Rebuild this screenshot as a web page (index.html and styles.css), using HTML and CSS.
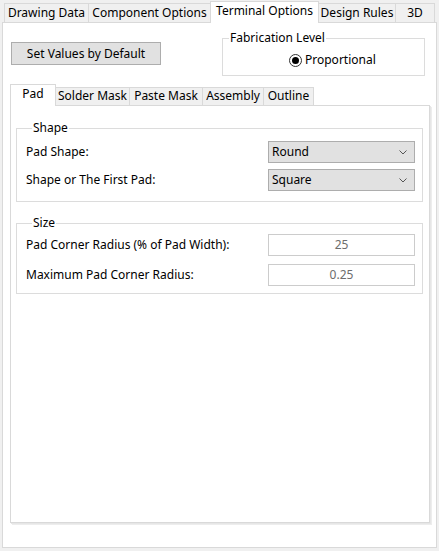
FILE: index.html
```html
<!DOCTYPE html>
<html>
<head>
<meta charset="utf-8">
<link rel="stylesheet" href="styles.css">
</head>
<body>
<div class="tabs top-tabs">
  <div class="tab t-dd">Drawing Data</div>
  <div class="tab t-co">Component Options</div>
  <div class="tab t-to active">Terminal Options</div>
  <div class="tab t-dr">Design Rules</div>
  <div class="tab t-3d">3D</div>
</div>
<div class="panel outer">
  <div class="top-row">
    <button class="btn">Set Values by Default</button>
    <fieldset class="group fab">
      <legend>Fabrication Level</legend>
      <div class="radio"><span class="radio-ring"><span class="radio-dot"></span></span><span>Proportional</span></div>
    </fieldset>
  </div>
  <div class="tabs inner-tabs">
    <div class="tab i-pad active">Pad</div>
    <div class="tab i-sm">Solder Mask</div>
    <div class="tab i-pm">Paste Mask</div>
    <div class="tab i-as">Assembly</div>
    <div class="tab i-ou">Outline</div>
  </div>
  <div class="panel inner">
    <fieldset class="group shape">
      <legend>Shape</legend>
      <div class="row">
        <span class="lbl">Pad Shape:</span>
        <div class="select"><span>Round</span><svg class="chev" width="8" height="5" viewBox="0 0 8 5"><path d="M0.5 0.5 L4 4 L7.5 0.5" fill="none" stroke="#555" stroke-width="1"/></svg></div>
      </div>
      <div class="row">
        <span class="lbl">Shape or The First Pad:</span>
        <div class="select"><span>Square</span><svg class="chev" width="8" height="5" viewBox="0 0 8 5"><path d="M0.5 0.5 L4 4 L7.5 0.5" fill="none" stroke="#555" stroke-width="1"/></svg></div>
      </div>
    </fieldset>
    <fieldset class="group size">
      <legend>Size</legend>
      <div class="row">
        <span class="lbl">Pad Corner Radius (% of Pad Width):</span>
        <div class="input">25</div>
      </div>
      <div class="row">
        <span class="lbl">Maximum Pad Corner Radius:</span>
        <div class="input">0.25</div>
      </div>
    </fieldset>
  </div>
</div>
</body>
</html>
```
FILE: styles.css
```css
* { box-sizing: border-box; }
html, body {
  margin: 0;
  padding: 0;
}
body {
  width: 439px;
  height: 551px;
  background: #f0f0f0;
  font-family: "Noto Sans", "Open Sans", sans-serif;
  font-size: 12px;
  line-height: 16px;
  color: #000;
  padding-top: 1px;
  overflow: hidden;
}

/* tabs */
.tabs {
  display: flex;
  align-items: flex-end;
  position: relative;
  z-index: 2;
}
.tab {
  border: 1px solid #d9d9d9;
  border-bottom: none;
  background: #f0f0f0;
  text-align: center;
  white-space: nowrap;
  margin-left: -1px;
}
.tab:first-child { margin-left: 0; }
.tab.active {
  background: #fff;
  position: relative;
  z-index: 3;
}

.top-tabs {
  height: 21px;
  padding-left: 4px;
}
.top-tabs .tab {
  height: 19px;
  padding-top: 1px;
}
.top-tabs .tab.active {
  height: 22px;
  margin-bottom: -1px;
  padding-top: 1px;
}
.t-dd { width: 85px; }
.t-co { width: 123px; }
.t-to { width: 109px; }
.t-dr { width: 78px; }
.t-3d { width: 40px; }

/* panels */
.panel {
  background: #fff;
  border: 1px solid #d9d9d9;
}
.outer {
  margin: 0 2px;
  height: 526px;
  display: flex;
  flex-direction: column;
  position: relative;
  z-index: 1;
}

.top-row {
  display: flex;
  align-items: flex-start;
  padding: 7px 0 0 8px;
}
.btn {
  margin: 12px 0 0 0;
  width: 150px;
  height: 23px;
  background: #e1e1e1;
  border: 1px solid #adadad;
  border-radius: 0;
  font-family: inherit;
  font-size: 12px;
  line-height: 16px;
  color: #000;
  padding: 0;
}

/* group boxes */
.group {
  margin: 0;
  border: 1px solid #dcdcdc;
  padding: 0;
  min-width: 0;
}
.group legend {
  margin-left: 6px;
  padding: 0 1px;
  line-height: 16px;
  font-size: 12px;
}
.fab {
  margin-left: 61px;
  width: 203px;
  padding: 6px 0 7px 0;
}
.radio {
  display: flex;
  align-items: center;
  height: 16px;
  padding-left: 66px;
}
.radio-ring {
  width: 13px;
  height: 13px;
  border: 1px solid #333;
  border-radius: 50%;
  display: flex;
  align-items: center;
  justify-content: center;
  margin-right: 3px;
}
.radio-dot {
  width: 7px;
  height: 7px;
  border-radius: 50%;
  background: #000;
}

.inner-tabs {
  margin: 8px 0 0 7px;
  height: 21px;
}
.inner-tabs .tab {
  height: 18px;
  padding-top: 0;
}
.inner-tabs .tab.active {
  height: 22px;
  margin-bottom: -1px;
  padding-top: 1px;
}
.i-pad { width: 46px; }
.i-sm { width: 75px; }
.i-pm { width: 74px; }
.i-as { width: 62px; }
.i-ou { width: 51px; }

.inner {
  flex: 1;
  margin: 0 6px 24px 7px;
  box-shadow: 1px 1px 0 #e6e6e6, 2px 2px 0 #ededed;
  display: flex;
  flex-direction: column;
}

.shape {
  margin: 14px 6px 0 5px;
  padding: 5px 7px 10px 9px;
}
.size {
  margin: 13px 6px 0 5px;
  padding: 3px 7px 7px 9px;
}
.row {
  display: flex;
  align-items: center;
  justify-content: space-between;
  height: 22px;
}
.shape .row + .row { margin-top: 6px; }
.size .row + .row { margin-top: 8px; }

.select {
  width: 147px;
  height: 22px;
  background: #e1e1e1;
  border: 1px solid #adadad;
  padding-left: 3px;
  line-height: 20px;
  display: flex;
  align-items: center;
  justify-content: space-between;
  padding-right: 7px;
}
.chev { display: block; }
.input {
  width: 147px;
  height: 22px;
  background: #fff;
  border: 1px solid #cccccc;
  line-height: 20px;
  text-align: center;
  color: #6d6d6d;
}
```
